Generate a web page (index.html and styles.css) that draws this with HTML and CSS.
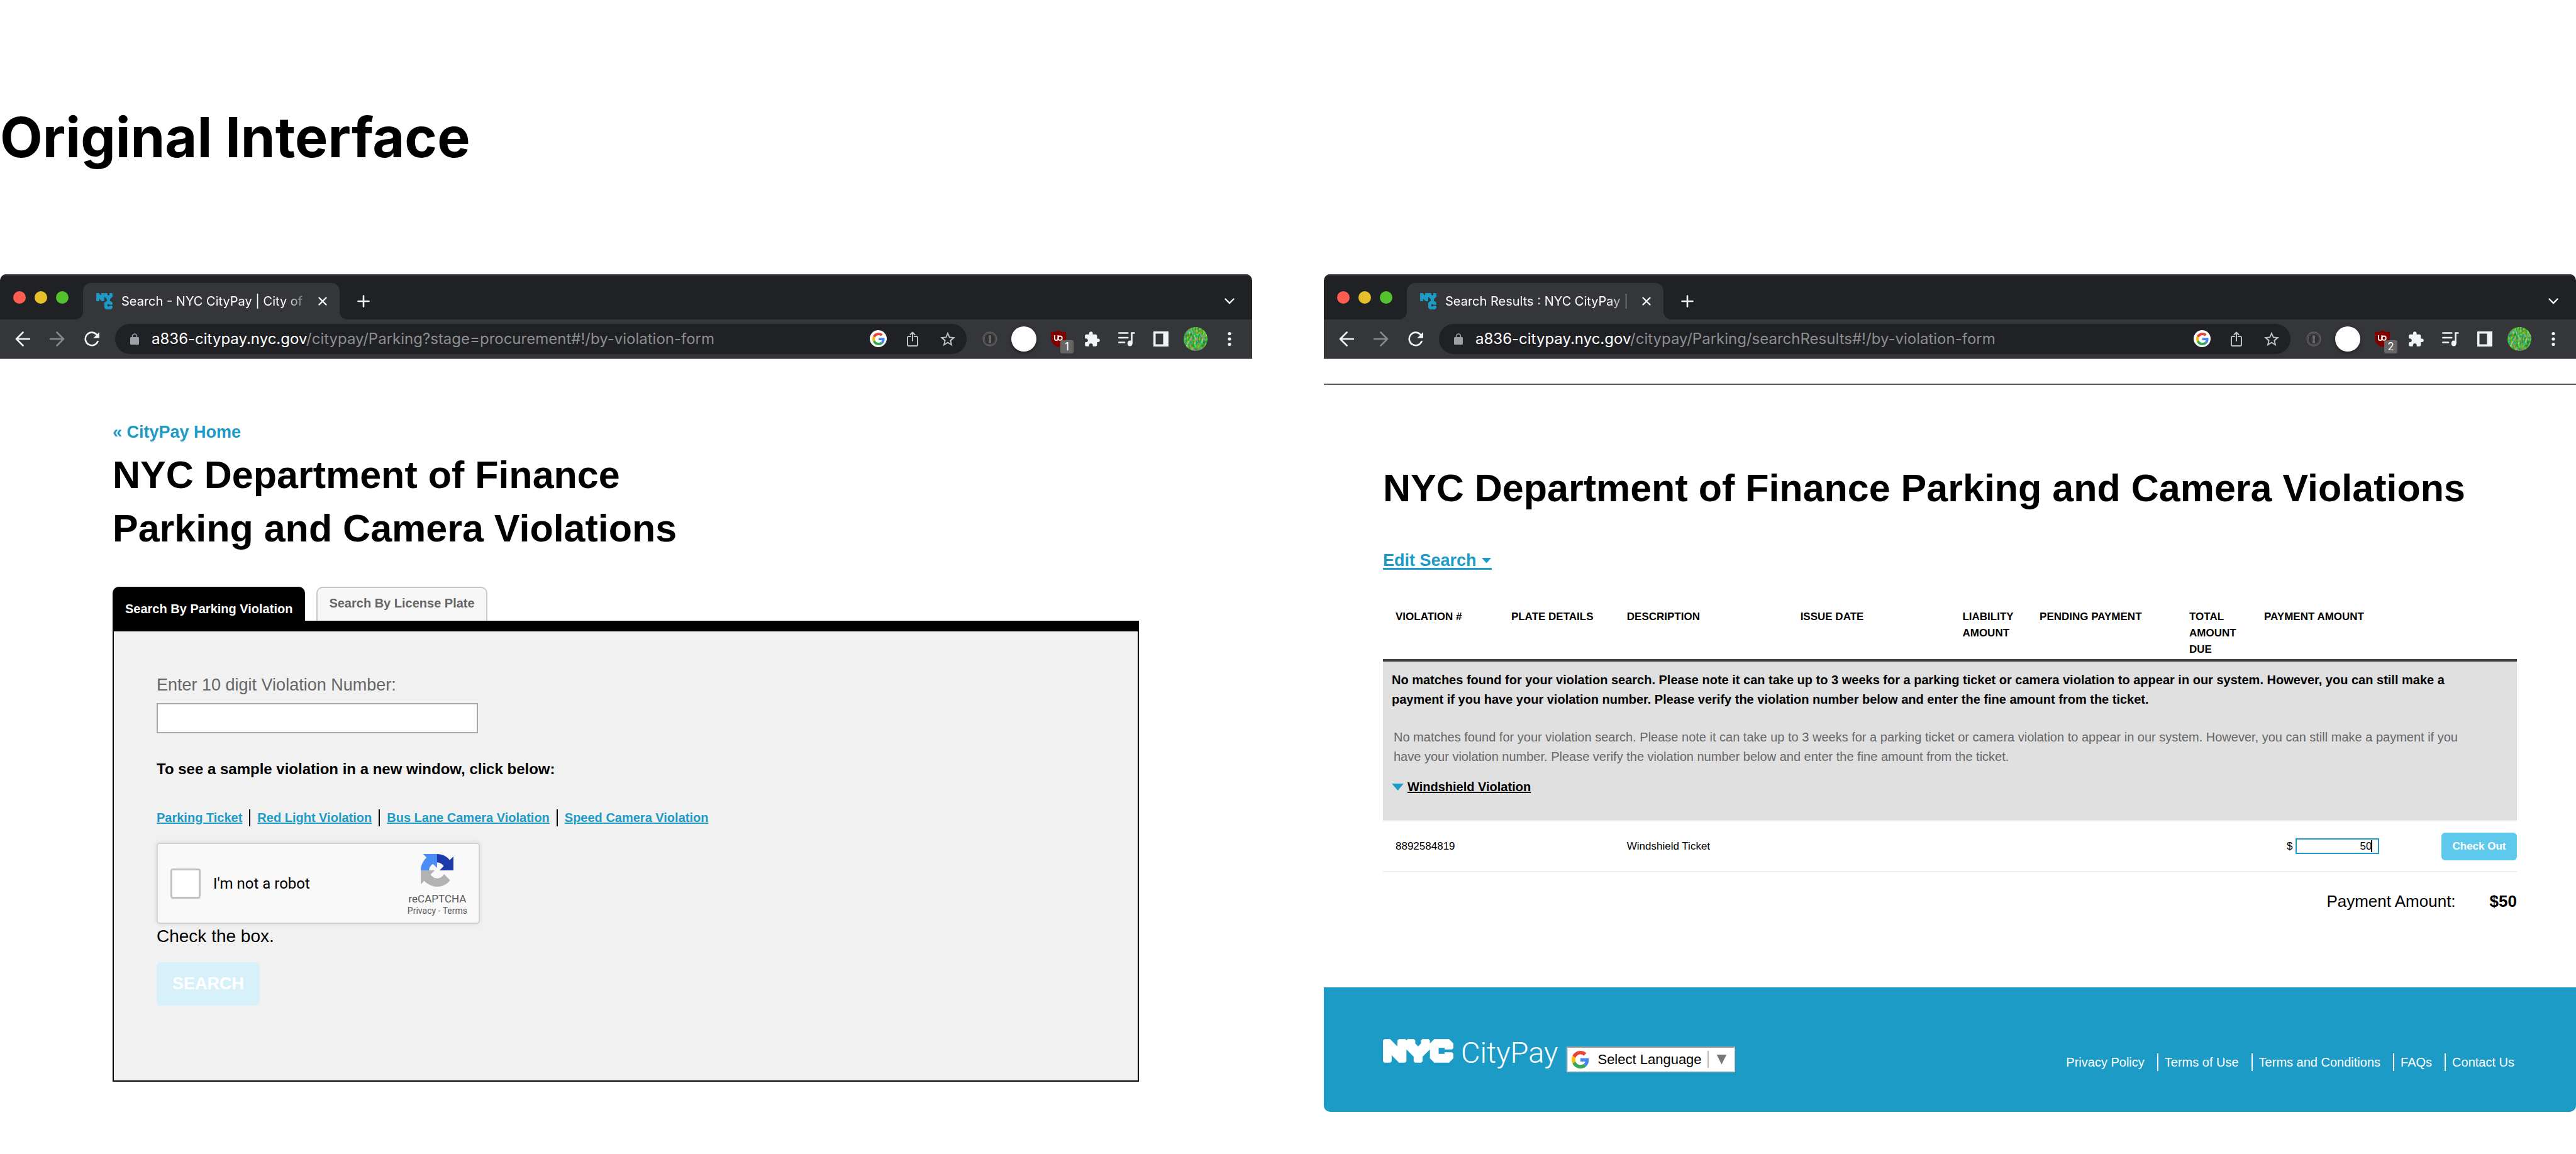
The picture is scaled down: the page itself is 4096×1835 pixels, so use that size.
FILE: index.html
```html
<!DOCTYPE html>
<html lang="en">
<head>
<meta charset="utf-8">
<title>Original Interface</title>
<meta name="viewport" content="width=device-width, initial-scale=1">
<link rel="stylesheet" href="styles.css">
</head>
<body>
<svg class="defs" width="0" height="0" aria-hidden="true">
  <defs>
    <symbol id="nyc" viewBox="96 100 615 206"><path d="M96 112l12-12h50l64 64v-52l13-12h55l11 11 11-11h54l12 12v26l25 26 25-26v-26l13-12h53l12 12v26l38-38h129l38 38v40l-13 12h-64v-13h-52v52h52v-13h64l13 13v39l-38 38H544l-38-38v-78l-64 64v39l-13 13h-52l-13-13v-39l-63-64v103l-12 13h-53l-64-64v51l-12 13h-52l-12-13z"/></symbol>
    <symbol id="favicon" viewBox="96 100 410 412"><path d="M96 112l12-12h50l64 64v-52l13-12h55l11 11 11-11h54l12 12v26l25 26 25-26v-26l13-12h53l12 12v78l-64 64v60H364v-60l-63-64v103l-12 13h-53l-64-64v51l-12 13h-52l-12-13z"/><path d="M301 344l38-38h129l38 38v40l-13 12h-64v-13h-52v52h52v-13h64l13 13v39l-38 38H339l-38-38z"/></symbol>
    <symbol id="back" viewBox="0 0 24 24"><path d="M12.5 1.500L2 12l10.500 10.500M2 12h21" fill="none" stroke="currentColor" stroke-width="2.600" stroke-linecap="round" stroke-linejoin="round"/></symbol>
    <symbol id="reload" viewBox="0 0 24 24"><path d="M21.500 16A10.300 10.300 0 1 1 19.500 4.800" fill="none" stroke="currentColor" stroke-width="2.600" stroke-linecap="round"/><path d="M24 1v9.500h-9.500z" fill="currentColor"/></symbol>
    <symbol id="lock" viewBox="0 0 14 18"><path d="M3.500 7V4.500a3.500 3.500 0 0 1 7 0V7" fill="none" stroke="currentColor" stroke-width="1.600"/><rect x="0" y="6" width="14" height="12" rx="1.500" fill="currentColor"/></symbol>
    <symbol id="google" viewBox="0 0 48 48"><path fill="#ea4335" d="M24 9.500c3.540 0 6.710 1.220 9.210 3.600l6.850-6.850C35.900 2.380 30.470 0 24 0 14.620 0 6.510 5.380 2.560 13.220l7.980 6.190C12.430 13.720 17.740 9.500 24 9.500z"/><path fill="#4285f4" d="M46.980 24.550c0-1.570-.150-3.090-.380-4.550H24v9.020h12.940c-.580 2.960-2.260 5.480-4.780 7.180l7.730 6c4.510-4.180 7.090-10.360 7.090-17.650z"/><path fill="#fbbc05" d="M10.530 28.590c-.480-1.450-.760-2.990-.760-4.590s.270-3.140.760-4.590l-7.980-6.190C.920 16.460 0 20.120 0 24c0 3.880.920 7.540 2.560 10.780l7.970-6.190z"/><path fill="#34a853" d="M24 48c6.480 0 11.930-2.130 15.890-5.810l-7.730-6c-2.150 1.450-4.920 2.300-8.160 2.300-6.260 0-11.570-4.220-13.470-9.910l-7.980 6.190C6.510 42.620 14.620 48 24 48z"/></symbol>
    <symbol id="share" viewBox="0 0 18 24"><g fill="none" stroke="currentColor" stroke-width="2" stroke-linecap="round" stroke-linejoin="round"><path d="M6 8H3a2 2 0 0 0-2 2v11a2 2 0 0 0 2 2h12a2 2 0 0 0 2-2V10a2 2 0 0 0-2-2h-3M9 15V2M5.500 5L9 1.500 12.500 5"/></g></symbol>
    <symbol id="star" viewBox="0 0 24 24"><path fill="currentColor" d="M24 9.200l-8.600-.700L12 .5 8.600 8.500 0 9.200l6.500 5.700L4.600 23.300 12 18.800l7.400 4.500-1.900-8.400zM12 16.500l-4.500 2.700 1.200-5.100-4-3.500 5.200-.400L12 5.300l2.100 4.900 5.200.4-4 3.500 1.200 5.100z"/></symbol>
    <symbol id="onepass" viewBox="0 0 24 24"><circle cx="12" cy="12" r="10.800" fill="#303134" stroke="#5b5b5a" stroke-width="1.800"/><circle cx="12" cy="12" r="8.800" fill="none" stroke="#6a6a69" stroke-width=".8"/><path d="M10 6.500h4v6l-1 1 1 1v4h-4v-4.500l1-1-1-1z" fill="#686866"/></symbol>
    <symbol id="shield" viewBox="0 0 24 27"><path d="M12 0c2.500 2.300 6 3.300 12 3v9c0 7.500-4 12-12 15C4 24 0 19.500 0 12V3c6 .3 9.500-.7 12-3z" fill="#800000"/><path d="M6 8v5.500a2.700 2.700 0 0 0 5.400 0V8" fill="none" stroke="#fff" stroke-width="1.800"/><circle cx="14.600" cy="12.700" r="3.200" fill="none" stroke="#fff" stroke-width="1.800"/></symbol>
    <symbol id="puzzle" viewBox="1 0 23 23"><path fill="currentColor" d="M20.500 11H19V7c0-1.100-.900-2-2-2h-4V3.500C13 2.120 11.880 1 10.500 1S8 2.120 8 3.500V5H4c-1.100 0-1.990.900-1.990 2v3.800H3.500c1.490 0 2.700 1.210 2.700 2.700s-1.210 2.700-2.700 2.700H2V20c0 1.100.900 2 2 2h3.800v-1.500c0-1.490 1.210-2.700 2.700-2.700 1.490 0 2.700 1.210 2.700 2.700V22H17c1.100 0 2-.900 2-2v-4h1.500c1.380 0 2.500-1.120 2.500-2.500S21.880 11 20.500 11z"/></symbol>
    <symbol id="music" viewBox="0 0 27 24"><g fill="none" stroke="currentColor" stroke-width="2.600" stroke-linecap="round"><path d="M1.300 2.500h14M1.300 10h14M1.300 17.500h8.700M21.500 18V2.500h4"/></g><ellipse cx="18.700" cy="19" rx="4" ry="4.600" fill="currentColor"/></symbol>
    <symbol id="panel" viewBox="0 0 24 24"><path fill="currentColor" fill-rule="evenodd" d="M0 0h24v24H0zM3.500 3.500v17H15.500v-17z"/></symbol>
    <symbol id="dots" viewBox="0 0 6 24"><g fill="currentColor"><circle cx="3" cy="3.500" r="2.600"/><circle cx="3" cy="12" r="2.600"/><circle cx="3" cy="20.500" r="2.600"/></g></symbol>
    <symbol id="close" viewBox="0 0 14 14"><path d="M1.500 1.500l11 11M12.500 1.500l-11 11" stroke="currentColor" stroke-width="2.400" stroke-linecap="round"/></symbol>
    <symbol id="plus" viewBox="0 0 20 20"><path d="M10 1.500v17M1.500 10h17" stroke="currentColor" stroke-width="2.600" stroke-linecap="round"/></symbol>
    <symbol id="chevron" viewBox="0 0 16 10"><path d="M1.500 1.500L8 8l6.500-6.500" fill="none" stroke="currentColor" stroke-width="2.400" stroke-linecap="round"/></symbol>
    <filter id="grass" x="0" y="0" width="100%" height="100%" color-interpolation-filters="sRGB"><feTurbulence type="fractalNoise" baseFrequency=".35 .18" numOctaves="3" seed="4"/><feColorMatrix values="1.400 0 0 0 -.350  0 .8 0 0 .280  0 0 1.300 0 -.350  0 0 0 0 1"/><feComposite in2="SourceGraphic" operator="in"/></filter>
    <symbol id="avatar" viewBox="0 0 38 38"><circle cx="19" cy="19" r="19" fill="#58b154" filter="url(#grass)"/></symbol>
  </defs>
</svg>

<header class="board-head"><h1 class="board-title">Original Interface</h1></header>

<main class="board">
  <section class="browser" aria-label="Search page">
    <div class="tabstrip">
      <div class="lights"><i class="light red"></i><i class="light amber"></i><i class="light green"></i></div>
      <div class="tab">
        <svg class="favicon"><use href="#favicon"/></svg>
        <span class="tab-title">Search - NYC CityPay | City of</span>
        <button class="ib" aria-label="Close tab"><svg width="14" height="14"><use href="#close"/></svg></button>
      </div>
      <button class="ib new-tab" aria-label="New tab"><svg width="20" height="20"><use href="#plus"/></svg></button>
      <button class="ib more-tabs" aria-label="Search tabs"><svg width="16" height="10"><use href="#chevron"/></svg></button>
    </div>
    <div class="toolbar">
      <div class="nav">
        <button class="ib" aria-label="Back"><svg width="24" height="24"><use href="#back"/></svg></button>
        <button class="ib forward" aria-label="Forward"><svg width="24" height="24"><use href="#back"/></svg></button>
        <button class="ib" aria-label="Reload"><svg width="24" height="24"><use href="#reload"/></svg></button>
      </div>
      <div class="omnibox">
        <svg class="lock"><use href="#lock"/></svg>
        <span class="url"><b>a836-citypay.nyc.gov</b>/citypay/Parking?stage=procurement#!/by-violation-form</span>
        <div class="omni-actions">
          <button class="ib g-badge" aria-label="Google"><svg width="20" height="20"><use href="#google"/></svg></button>
          <button class="ib" aria-label="Share"><svg width="18" height="24"><use href="#share"/></svg></button>
          <button class="ib" aria-label="Bookmark"><svg width="24" height="24"><use href="#star"/></svg></button>
        </div>
      </div>
      <div class="extensions">
        <button class="ib" aria-label="Password manager"><svg width="24" height="24"><use href="#onepass"/></svg></button>
        <button class="ib disc" aria-label="Extension"></button>
        <button class="ib ubo" aria-label="Content blocker"><svg width="24" height="27"><use href="#shield"/></svg><span class="count">1</span></button>
        <button class="ib" aria-label="Extensions"><svg width="26" height="26"><use href="#puzzle"/></svg></button>
        <button class="ib" aria-label="Media"><svg width="27" height="24"><use href="#music"/></svg></button>
        <button class="ib" aria-label="Side panel"><svg width="24" height="24"><use href="#panel"/></svg></button>
        <button class="ib" aria-label="Profile"><svg width="38" height="38"><use href="#avatar"/></svg></button>
        <button class="ib" aria-label="Menu"><svg width="6" height="24"><use href="#dots"/></svg></button>
      </div>
    </div>

    <div class="search-page">
      <a class="home-link" href="#">« CityPay Home</a>
      <h2 class="page-title">NYC Department of Finance<br>Parking and Camera Violations</h2>
      <div class="search-tabs" role="tablist">
        <button class="search-tab active" role="tab" aria-selected="true">Search By Parking Violation</button>
        <button class="search-tab" role="tab" aria-selected="false">Search By License Plate</button>
      </div>
      <form class="search-panel">
        <label class="field-label" for="violation">Enter 10 digit Violation Number:</label>
        <input class="field" id="violation" type="text">
        <p class="sample-text">To see a sample violation in a new window, click below:</p>
        <nav class="samples">
          <a href="#">Parking Ticket</a>
          <a href="#">Red Light Violation</a>
          <a href="#">Bus Lane Camera Violation</a>
          <a href="#">Speed Camera Violation</a>
        </nav>
        <div class="captcha">
          <input class="captcha-box" id="robot" type="checkbox">
          <label class="captcha-label" for="robot">I'm not a robot</label>
          <div class="captcha-brand">
            <svg width="52" height="52" viewBox="0 0 64 64"><path d="M64 31.955l-.033-1.370V4.687l-7.160 7.160C50.948 4.674 42.033.093 32.050.093c-10.400 0-19.622 4.960-25.458 12.640l11.736 11.860a15.550 15.550 0 0 1 4.754-5.334c2.050-1.600 4.952-2.906 8.968-2.906.485 0 .860.057 1.135.163 4.976.393 9.288 3.140 11.828 7.124l-8.307 8.307L64 31.953" fill="#1c3aa9"/><path d="M31.862.094l-1.370.033H4.594l7.160 7.160C4.580 13.147 0 22.060 0 32.046c0 10.400 4.960 19.622 12.640 25.458L24.500 45.768a15.550 15.550 0 0 1-5.334-4.754c-1.600-2.050-2.906-4.952-2.906-8.968 0-.485.057-.860.163-1.135.393-4.976 3.140-9.288 7.124-11.828l8.307 8.307L31.860.095" fill="#4a8df5"/><path d="M.001 32.045l.033 1.370v25.898l7.160-7.160c5.860 7.173 14.774 11.754 24.760 11.754 10.400 0 19.622-4.960 25.458-12.640l-11.736-11.860a15.550 15.550 0 0 1-4.754 5.334c-2.050 1.600-4.952 2.906-8.968 2.906-.485 0-.860-.057-1.135-.163-4.976-.393-9.288-3.140-11.828-7.124l8.307-8.307c-10.522.040-22.400.066-27.295-.005" fill="#b2b2b2"/></svg>
            <span class="captcha-name">reCAPTCHA</span>
            <span class="captcha-legal"><a href="#">Privacy</a> - <a href="#">Terms</a></span>
          </div>
        </div>
        <p class="captcha-hint">Check the box.</p>
        <button class="search-button" type="button">SEARCH</button>
      </form>
    </div>
  </section>

  <section class="browser" aria-label="Search results page">
    <div class="tabstrip">
      <div class="lights"><i class="light red"></i><i class="light amber"></i><i class="light green"></i></div>
      <div class="tab">
        <svg class="favicon"><use href="#favicon"/></svg>
        <span class="tab-title">Search Results : NYC CityPay |</span>
        <button class="ib" aria-label="Close tab"><svg width="14" height="14"><use href="#close"/></svg></button>
      </div>
      <button class="ib new-tab" aria-label="New tab"><svg width="20" height="20"><use href="#plus"/></svg></button>
      <button class="ib more-tabs" aria-label="Search tabs"><svg width="16" height="10"><use href="#chevron"/></svg></button>
    </div>
    <div class="toolbar">
      <div class="nav">
        <button class="ib" aria-label="Back"><svg width="24" height="24"><use href="#back"/></svg></button>
        <button class="ib forward" aria-label="Forward"><svg width="24" height="24"><use href="#back"/></svg></button>
        <button class="ib" aria-label="Reload"><svg width="24" height="24"><use href="#reload"/></svg></button>
      </div>
      <div class="omnibox">
        <svg class="lock"><use href="#lock"/></svg>
        <span class="url"><b>a836-citypay.nyc.gov</b>/citypay/Parking/searchResults#!/by-violation-form</span>
        <div class="omni-actions">
          <button class="ib g-badge" aria-label="Google"><svg width="20" height="20"><use href="#google"/></svg></button>
          <button class="ib" aria-label="Share"><svg width="18" height="24"><use href="#share"/></svg></button>
          <button class="ib" aria-label="Bookmark"><svg width="24" height="24"><use href="#star"/></svg></button>
        </div>
      </div>
      <div class="extensions">
        <button class="ib" aria-label="Password manager"><svg width="24" height="24"><use href="#onepass"/></svg></button>
        <button class="ib disc" aria-label="Extension"></button>
        <button class="ib ubo" aria-label="Content blocker"><svg width="24" height="27"><use href="#shield"/></svg><span class="count">2</span></button>
        <button class="ib" aria-label="Extensions"><svg width="26" height="26"><use href="#puzzle"/></svg></button>
        <button class="ib" aria-label="Media"><svg width="27" height="24"><use href="#music"/></svg></button>
        <button class="ib" aria-label="Side panel"><svg width="24" height="24"><use href="#panel"/></svg></button>
        <button class="ib" aria-label="Profile"><svg width="38" height="38"><use href="#avatar"/></svg></button>
        <button class="ib" aria-label="Menu"><svg width="6" height="24"><use href="#dots"/></svg></button>
      </div>
    </div>

    <hr class="rule">
    <div class="results-page">
      <h2 class="page-title">NYC Department of Finance Parking and Camera Violations</h2>
      <a class="edit-link" href="#">Edit Search <i class="caret"></i></a>
      <table class="results">
        <colgroup>
          <col class="c-number"><col class="c-plate"><col class="c-desc"><col class="c-date"><col class="c-liability"><col class="c-pending"><col class="c-total"><col class="c-payment"><col>
        </colgroup>
        <thead>
          <tr>
            <th>VIOLATION #</th><th>PLATE DETAILS</th><th>DESCRIPTION</th><th>ISSUE DATE</th><th>LIABILITY AMOUNT</th><th>PENDING PAYMENT</th><th>TOTAL AMOUNT DUE</th><th>PAYMENT AMOUNT</th><th></th>
          </tr>
        </thead>
        <tbody>
          <tr>
            <td class="notice" colspan="9">
              <p class="notice-main">No matches found for your violation search. Please note it can take up to 3 weeks for a parking ticket or camera violation to appear in our system. However, you can still make a payment if you have your violation number. Please verify the violation number below and enter the fine amount from the ticket.</p>
              <p class="notice-sub">No matches found for your violation search. Please note it can take up to 3 weeks for a parking ticket or camera violation to appear in our system. However, you can still make a payment if you have your violation number. Please verify the violation number below and enter the fine amount from the ticket.</p>
              <div class="group"><i class="caret wide"></i><a href="#">Windshield Violation</a></div>
            </td>
          </tr>
          <tr class="item">
            <td>8892584819</td><td></td><td>Windshield Ticket</td><td></td><td></td><td></td><td></td>
            <td>
              <div class="amount">
                <label for="amount">$</label>
                <span class="amount-box"><input class="amount-input" id="amount" type="text" value="50"></span>
              </div>
            </td>
            <td class="action"><button class="checkout" type="button">Check Out</button></td>
          </tr>
        </tbody>
      </table>
      <div class="total"><span>Payment Amount:</span><strong>$50</strong></div>
    </div>

    <footer class="footer">
      <a class="brand" href="#"><svg class="nyc"><use href="#nyc"/></svg><span>CityPay</span></a>
      <div class="language">
        <svg width="28" height="28"><use href="#google"/></svg>
        <select class="language-select" aria-label="Select Language"><option>Select Language</option></select>
        <i class="language-arrow"></i>
      </div>
      <nav class="footer-links">
        <a href="#">Privacy Policy</a>
        <a href="#">Terms of Use</a>
        <a href="#">Terms and Conditions</a>
        <a href="#">FAQs</a>
        <a href="#">Contact Us</a>
      </nav>
    </footer>
  </section>
</main>
</body>
</html>
```
FILE: styles.css
```css
* { box-sizing: border-box; }

body {
  margin: 0;
  background: #fff;
  color: #000;
  font-family: "Liberation Sans", Arial, sans-serif;
}

h1, h2, p { margin: 0; }
button { font: inherit; border: 0; cursor: pointer; }
.defs { position: absolute; }

.board-head { padding: 165px 0; }
.board-title {
  font-family: Inter, sans-serif;
  font-size: 88px;
  font-weight: 700;
  line-height: 106px;
}

.board {
  display: grid;
  grid-template-columns: 1fr 1fr;
  gap: 114px;
  align-items: start;
}

/* Browser chrome */
.browser {
  min-width: 0;
  border-radius: 10px;
  overflow: hidden;
  font-size: 20px;
}

.tabstrip {
  display: flex;
  align-items: center;
  height: 72px;
  padding: 0 16px 0 21px;
  background: #202124;
  border-top: 2px solid #48494b;
  font-family: Inter, sans-serif;
}
.lights { display: flex; gap: 14px; width: 111px; }
.light { width: 20px; height: 20px; border-radius: 50%; }
.red { background: #ff5c52; }
.amber { background: #e6c029; }
.green { background: #54c22c; }

.tab {
  position: relative;
  display: flex;
  align-items: center;
  align-self: flex-end;
  width: 408px;
  height: 58px;
  padding: 0 20px 0 21px;
  background: #35363a;
  border-radius: 13px 13px 0 0;
}
.tab::before, .tab::after {
  content: "";
  position: absolute;
  bottom: 0;
  width: 13px;
  height: 13px;
}
.tab::before { right: 100%; background: radial-gradient(circle at 0 0, #202124 13px, #35363a 13px); }
.tab::after { left: 100%; background: radial-gradient(circle at 100% 0, #202124 13px, #35363a 13px); }
.favicon { flex: none; width: 26px; height: 26px; fill: #1c9bc7; }
.tab-title {
  flex: 1;
  min-width: 0;
  margin: 0 11px 0 14px;
  white-space: nowrap;
  color: #fff;
  line-height: 30px;
  mask-image: linear-gradient(to right, #000 86%, transparent);
}

.ib {
  display: flex;
  flex: none;
  align-items: center;
  justify-content: center;
  padding: 0;
  background: none;
  color: #f1f3f4;
}
.new-tab, .more-tabs { align-self: flex-end; height: 58px; }
.new-tab { margin-left: 28px; }
.more-tabs { width: 40px; margin-left: auto; }

.toolbar {
  display: flex;
  align-items: center;
  gap: 17px;
  height: 63px;
  padding: 0 16px;
  background: #35363a;
  border-bottom: 2px solid #5f6064;
}
.nav { display: flex; justify-content: space-between; width: 150px; }
.nav .ib { width: 40px; }
.forward { color: #87888a; transform: scaleX(-1); }
.omnibox {
  display: flex;
  flex: 1;
  align-items: center;
  min-width: 0;
  height: 48px;
  padding: 0 15px 0 24px;
  background: #202124;
  border-radius: 24px;
}
.lock { flex: none; width: 14px; height: 18px; color: #9aa0a6; }
.url {
  flex: 1;
  margin-left: 20px;
  color: #8d8e91;
  font: 24px/30px Inter, sans-serif;
  white-space: nowrap;
}
.url b { color: #fff; font-weight: 400; }
.omni-actions { display: flex; justify-content: space-between; width: 139px; }
.omni-actions .ib { width: 30px; color: #bdc1c6; }
.omni-actions .g-badge { width: 27px; height: 27px; border-radius: 50%; background: #fff; }
.extensions { display: flex; align-items: center; justify-content: space-between; width: 421px; }
.extensions .ib { width: 40px; }
.extensions .disc { height: 40px; border-radius: 50%; background: #fff; box-shadow: 0 2px 5px #1c1c1e; }
.ubo { position: relative; }
.count {
  position: absolute;
  left: 23px;
  top: 16px;
  width: 21px;
  height: 21px;
  border-radius: 3px;
  background: #666;
  color: #fff;
  font: 17px/21px Inter, sans-serif;
  text-align: center;
}

/* Search page */
.search-page { padding: 96px 180px 0 179px; }
.home-link {
  display: block;
  color: #1c9bc7;
  font-size: 27px;
  font-weight: 700;
  line-height: 40px;
  text-decoration: none;
}
.page-title { font-size: 61px; line-height: 85px; }
.search-page .page-title { margin-top: 6px; }
.search-tabs { display: flex; gap: 18px; margin-top: 50px; }
.search-tab {
  height: 54px;
  padding: 12px 18px 16px;
  border: 2px solid #c8c8c8;
  border-bottom: 0;
  border-radius: 10px 10px 0 0;
  background: #f7f7f7;
  color: #666;
  font-weight: 700;
  line-height: 24px;
}
.search-tab.active {
  padding-top: 21px;
  padding-bottom: 7px;
  border-color: #000;
  background: #000;
  color: #fff;
}
.search-panel {
  padding: 65px 68px 119px;
  border: 2px solid #000;
  border-top-width: 17px;
  background: #f1f1f1;
}
.field-label { display: block; color: #666; font-size: 27px; line-height: 40px; }
.field {
  display: block;
  width: 511px;
  height: 48px;
  margin-top: 9px;
  padding: 0 12px;
  border: 2px solid #a9a9a9;
  background: #fff;
  font: 27px "Liberation Sans", Arial, sans-serif;
}
.sample-text { margin-top: 39px; font-size: 24px; font-weight: 700; line-height: 36px; }
.samples { display: flex; margin-top: 45px; font-weight: 700; line-height: 28px; }
.samples a { color: #1c9bc7; text-decoration-thickness: 2px; }
.samples a + a::before {
  content: "";
  display: inline-block;
  height: 27px;
  margin: 0 11px;
  border-left: 2px solid #000;
  vertical-align: bottom;
}
.captcha {
  display: flex;
  align-items: center;
  width: 514px;
  height: 129px;
  margin-top: 26px;
  padding: 0 18px 0 20px;
  border: 2px solid #d3d3d3;
  border-radius: 5px;
  background: #f9f9f9;
  box-shadow: 0 0 6px 1px #ddd;
  font-family: Roboto, sans-serif;
}
.captcha-box {
  appearance: none;
  width: 48px;
  height: 48px;
  margin: 0;
  border: 3px solid #c1c1c1;
  border-radius: 4px;
  background: #fff;
}
.captcha-label { margin-left: 20px; font-size: 24px; }
.captcha-brand {
  display: flex;
  flex-direction: column;
  align-items: center;
  margin-left: auto;
  padding-top: 4px;
  color: #555;
}
.captcha-name { margin-top: 8px; font-size: 17px; line-height: 22px; }
.captcha-legal { font-size: 14px; line-height: 16px; }
.captcha-legal a { color: inherit; text-decoration: none; }
.captcha-hint { font-size: 28px; line-height: 40px; }
.search-button {
  height: 69px;
  margin-top: 21px;
  padding: 0 25px;
  border-radius: 7px;
  background: #d7f0fa;
  color: #fff;
  font-size: 27px;
  font-weight: 700;
}

/* Results page */
.rule { height: 2px; margin: 39px 0 0; border: 0; background: #5a5a5a; }
.results-page { padding: 122px 94px 0; }
.edit-link {
  display: inline-flex;
  align-items: center;
  gap: 8px;
  margin-top: 60px;
  border-bottom: 3px solid #1c9bc7;
  color: #1c9bc7;
  font-size: 27px;
  font-weight: 700;
  line-height: 24px;
  text-decoration: none;
  vertical-align: top;
}
.caret {
  width: 16px;
  height: 9px;
  background: #1c9bc7;
  clip-path: polygon(0 0, 100% 0, 50% 100%);
}
.caret.wide { width: 19px; height: 11px; }
.results {
  width: 100%;
  margin-top: 62px;
  border-collapse: collapse;
  table-layout: fixed;
  font-size: 17px;
  line-height: 26px;
}
.c-number, .c-plate { width: 10.2%; }
.c-desc { width: 15.3%; }
.c-date { width: 14.3%; }
.c-liability { width: 6.8%; }
.c-pending { width: 13.2%; }
.c-total { width: 6.6%; }
.c-payment { width: 15%; }
.results th { padding: 0 0 2px 20px; border-bottom: 4px solid #404040; text-align: left; vertical-align: top; }
.results .notice {
  padding: 14px 60px 37px 14px;
  border-bottom: 2px solid #eee;
  background: #e0e0e0;
  font-size: 20px;
  line-height: 31px;
}
.notice-main { font-weight: 700; }
.notice-sub { margin: 29px 0 17px; padding-left: 3px; color: #666; }
.group { display: flex; align-items: center; gap: 6px; font-weight: 700; }
.group a { color: #000; text-decoration-thickness: 2px; }
.item td { height: 81px; padding: 0 0 0 20px; border-bottom: 2px solid #eee; }
.item .action { padding: 0; text-align: right; }
.amount { display: flex; align-items: center; gap: 5px; padding-left: 36px; }
.amount-box { position: relative; display: flex; }
.amount-box::after {
  content: "";
  position: absolute;
  top: 3px;
  bottom: 3px;
  right: 11px;
  width: 2px;
  background: #000;
}
.amount-input {
  width: 133px;
  height: 25px;
  padding: 0 10px;
  border: 2px solid #1c9bc7;
  background: #fff;
  font: 17px "Liberation Sans", Arial, sans-serif;
  text-align: right;
}
.checkout {
  width: 120px;
  height: 44px;
  padding: 0;
  border-radius: 6px;
  background: #5fc8ed;
  color: #fff;
  font-weight: 700;
  vertical-align: middle;
}
.total {
  display: flex;
  justify-content: flex-end;
  gap: 54px;
  margin-top: 26px;
  font-size: 26px;
  line-height: 40px;
}

.footer {
  display: flex;
  align-items: flex-end;
  height: 198px;
  margin-top: 117px;
  padding: 0 98px 63px 94px;
  background: #1c9bc7;
}
.brand {
  display: flex;
  align-items: baseline;
  gap: 12px;
  padding-bottom: 4px;
  color: #fff;
  font: 300 47px/54px Roboto, sans-serif;
  text-decoration: none;
}
.nyc { width: 112px; height: 38px; fill: #fff; }
.language {
  display: flex;
  align-items: center;
  width: 268px;
  height: 41px;
  margin-left: 14px;
  padding: 0 12px 0 6px;
  border: 2px solid #d5d5d5;
  border-top-color: #9b9b9b;
  background: #fff;
}
.language-select {
  appearance: none;
  flex: 1;
  height: 27px;
  margin: 0 12px 0 13px;
  padding: 0;
  border: 0;
  border-right: 2px solid #bbb;
  background: none;
  color: #000;
  font: 22px "Liberation Sans", Arial, sans-serif;
}
.language-arrow {
  width: 16px;
  height: 16px;
  background: #777;
  clip-path: polygon(0 0, 100% 0, 50% 100%);
}
.footer-links { display: flex; margin-left: auto; padding-bottom: 2px; line-height: 28px; }
.footer-links a { color: #fff; text-decoration: none; }
.footer-links a + a { margin-left: 20px; padding-left: 10px; border-left: 2px solid #fff; }
```
